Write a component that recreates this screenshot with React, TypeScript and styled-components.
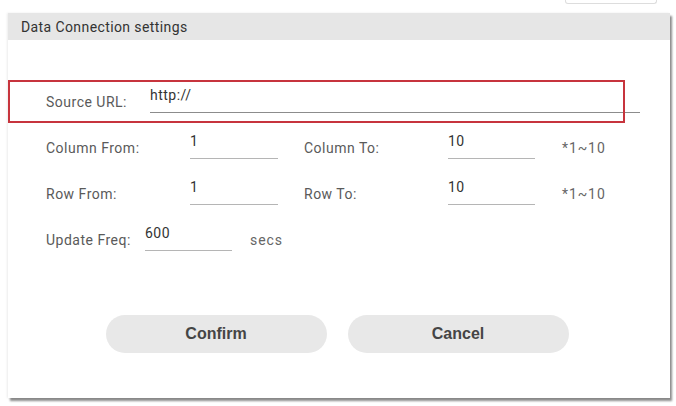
import React from "react";
import styled, { createGlobalStyle } from "styled-components";

const Global = createGlobalStyle`
  html, body { margin: 0; padding: 0; background: #ffffff; }
  body { font-family: Roboto, "Noto Sans", "Liberation Sans", sans-serif; }
`;

const Page = styled.div`
  width: 676px;
  height: 406px;
  display: flex;
  flex-direction: column;
  overflow: hidden;
`;

const TopStrip = styled.div`
  height: 13px;
  display: flex;
  justify-content: flex-end;
  padding-right: 19px;
`;

const TopTab = styled.div`
  width: 90px;
  height: 3px;
  border: 1px solid #dddddd;
  border-top: none;
  border-radius: 0 0 3px 3px;
`;

const Dialog = styled.div`
  margin-left: 8px;
  width: 662px;
  height: 385px;
  background: #ffffff;
  display: flex;
  flex-direction: column;
  box-shadow: 2px 3px 2px rgba(0, 0, 0, 0.45), -1px 0 2px rgba(0, 0, 0, 0.08);
`;

const Header = styled.div`
  height: 27px;
  background: #e6e6e6;
  display: flex;
  align-items: center;
  padding-left: 13px;
  font-size: 14px;
  letter-spacing: 0.4px;
  color: #333333;
`;

const Body = styled.div`
  flex: 1;
  display: flex;
  flex-direction: column;
  padding: 45px 0 0 38px;
`;

const Rows = styled.div`
  display: flex;
  flex-direction: column;
  gap: 18px;
`;

const Row = styled.div`
  position: relative;
  height: 28px;
  display: flex;
  align-items: flex-end;
`;

const Highlight = styled.div`
  position: absolute;
  left: -38px;
  top: -5px;
  width: 613px;
  height: 39px;
  border: 2px solid #c7343d;
  pointer-events: none;
`;

const Label = styled.div<{ $w: number }>`
  width: ${(p) => p.$w}px;
  flex: none;
  font-size: 14px;
  letter-spacing: 0.5px;
  line-height: 18px;
  padding-bottom: 2px;
  color: #5a5a5a;
  white-space: nowrap;
`;

const Field = styled.div<{ $w: number; $dark?: boolean }>`
  width: ${(p) => p.$w}px;
  flex: none;
  font-size: 14px;
  letter-spacing: 0.5px;
  line-height: 18px;
  padding-bottom: 8px;
  border-bottom: 1px solid ${(p) => (p.$dark ? "#8c8c8c" : "#b5b5b5")};
  color: #333333;
`;

const Spacer = styled.div<{ $w: number }>`
  width: ${(p) => p.$w}px;
  flex: none;
`;

const Hint = styled.div`
  font-size: 14px;
  letter-spacing: 0.9px;
  line-height: 18px;
  padding-bottom: 2px;
  color: #666666;
`;

const Buttons = styled.div`
  margin-top: 64px;
  margin-left: -38px;
  display: flex;
  justify-content: center;
  gap: 21px;
  padding-right: 4px;
`;

const Button = styled.button`
  width: 221px;
  height: 38px;
  border: none;
  border-radius: 19px;
  background: #e8e8e8;
  font-family: "Liberation Sans", Arial, sans-serif;
  font-weight: bold;
  font-size: 16px;
  color: #454545;
  cursor: pointer;
`;

export default function App() {
  return (
    <Page>
      <Global />
      <TopStrip>
        <TopTab />
      </TopStrip>
      <Dialog>
        <Header>Data Connection settings</Header>
        <Body>
          <Rows>
            <Row>
              <Label $w={104}>Source URL:</Label>
              <Field $w={490} $dark>
                http://
              </Field>
              <Highlight />
            </Row>
            <Row>
              <Label $w={144}>Column From:</Label>
              <Field $w={88}>1</Field>
              <Spacer $w={26} />
              <Label $w={144}>Column To:</Label>
              <Field $w={87}>10</Field>
              <Spacer $w={27} />
              <Hint>*1~10</Hint>
            </Row>
            <Row>
              <Label $w={144}>Row From:</Label>
              <Field $w={88}>1</Field>
              <Spacer $w={26} />
              <Label $w={144}>Row To:</Label>
              <Field $w={87}>10</Field>
              <Spacer $w={27} />
              <Hint>*1~10</Hint>
            </Row>
            <Row>
              <Label $w={99}>Update Freq:</Label>
              <Field $w={87}>600</Field>
              <Spacer $w={18} />
              <Hint>secs</Hint>
            </Row>
          </Rows>
          <Buttons>
            <Button>Confirm</Button>
            <Button>Cancel</Button>
          </Buttons>
        </Body>
      </Dialog>
    </Page>
  );
}
